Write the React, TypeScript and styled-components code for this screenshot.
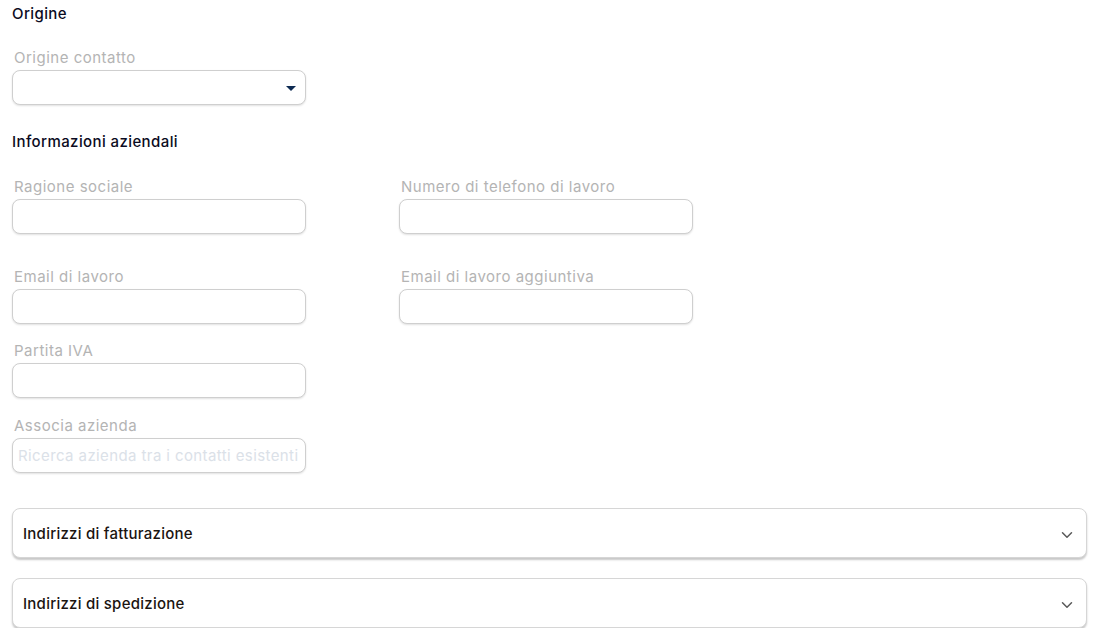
import React from 'react';
import styled, { createGlobalStyle } from 'styled-components';
import { ChevronDown } from 'lucide-react';

const GlobalStyle = createGlobalStyle`
  html, body {
    margin: 0;
    padding: 0;
    background: #ffffff;
  }
  body {
    font-family: Inter, "Noto Sans", "Liberation Sans", sans-serif;
  }
  * {
    box-sizing: border-box;
  }
`;

const Page = styled.div`
  width: 1093px;
  padding: 4px 6px 0 12px;
  display: flex;
  flex-direction: column;
`;

const SectionTitle = styled.div<{ gapAfter: number }>`
  font-size: 15px;
  line-height: 20px;
  letter-spacing: 0.4px;
  font-weight: 450;
  color: #0b0b22;
  margin-bottom: ${({ gapAfter }) => gapAfter}px;
`;

const FieldGrid = styled.div<{ gapAfter: number }>`
  display: grid;
  grid-template-columns: 294px 294px;
  column-gap: 93px;
  margin-bottom: ${({ gapAfter }) => gapAfter}px;
`;

const Field = styled.div`
  display: flex;
  flex-direction: column;
  gap: 2px;
`;

const Label = styled.label`
  padding-left: 2px;
  font-size: 15px;
  line-height: 20px;
  letter-spacing: 0.5px;
  color: #b4b4b4;
`;

const InputBox = styled.div`
  position: relative;
  height: 35px;
  border: 1px solid #cfcfcf;
  border-radius: 8px;
  background: #ffffff;
  box-shadow: 0 1px 2px rgba(0, 0, 0, 0.12);
  display: flex;
  align-items: center;
  padding: 0 5px;
`;

const TextInput = styled.input`
  width: 100%;
  border: none;
  outline: none;
  padding: 0;
  background: transparent;
  font-family: inherit;
  font-size: 15px;
  letter-spacing: 0.4px;
  color: #333;

  &::placeholder {
    color: #dbe1e8;
  }
`;

// small filled triangle on the select's right edge
const Caret = styled.span`
  position: absolute;
  right: 9px;
  top: 15px;
  width: 0;
  height: 0;
  border-left: 5px solid transparent;
  border-right: 5px solid transparent;
  border-top: 5px solid #0d2a52;
`;

const Accordion = styled.div<{ gapAfter: number }>`
  height: 50px;
  border: 1px solid #d6d6d6;
  border-radius: 8px;
  background: #ffffff;
  box-shadow: 0 2px 2px rgba(0, 0, 0, 0.22);
  display: flex;
  align-items: center;
  justify-content: space-between;
  padding: 0 10px 0 10px;
  margin-bottom: ${({ gapAfter }) => gapAfter}px;
  color: #1b1410;
  font-size: 15px;
  letter-spacing: 0.25px;
  font-weight: 450;
`;

const ChevronIcon = styled(ChevronDown)`
  color: #5a5a5a;
  margin-top: 4px;
`;

const Spacer = styled.div<{ h: number }>`
  height: ${({ h }) => h}px;
`;

type FieldDef = { label: string; placeholder?: string; select?: boolean };

const InputField: React.FC<FieldDef> = ({ label, placeholder, select }) => (
  <Field>
    <Label>{label}</Label>
    <InputBox>
      <TextInput placeholder={placeholder} readOnly={select} />
      {select && <Caret />}
    </InputBox>
  </Field>
);

export default function App() {
  return (
    <>
      <GlobalStyle />
      <Page>
        <SectionTitle gapAfter={24}>Origine</SectionTitle>
        <FieldGrid gapAfter={27}>
          <InputField label="Origine contatto" select />
        </FieldGrid>

        <SectionTitle gapAfter={25}>Informazioni aziendali</SectionTitle>
        <FieldGrid gapAfter={33}>
          <InputField label="Ragione sociale" />
          <InputField label="Numero di telefono di lavoro" />
        </FieldGrid>
        <FieldGrid gapAfter={17}>
          <InputField label="Email di lavoro" />
          <InputField label="Email di lavoro aggiuntiva" />
        </FieldGrid>
        <FieldGrid gapAfter={18}>
          <InputField label="Partita IVA" />
        </FieldGrid>
        <FieldGrid gapAfter={0}>
          <InputField label="Associa azienda" placeholder="Ricerca azienda tra i contatti esistenti" />
        </FieldGrid>

        <Spacer h={35} />
        <Accordion gapAfter={20}>
          Indirizzi di fatturazione
          <ChevronIcon size={18} strokeWidth={2} />
        </Accordion>
        <Accordion gapAfter={0}>
          Indirizzi di spedizione
          <ChevronIcon size={18} strokeWidth={2} />
        </Accordion>
      </Page>
    </>
  );
}
